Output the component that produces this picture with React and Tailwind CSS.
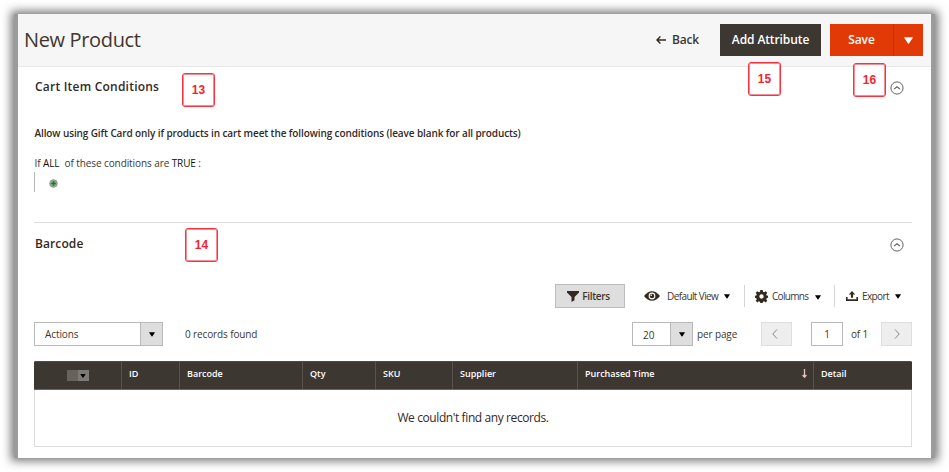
import React from 'react';

function Caret({ className = '' }) {
  return (
    <svg viewBox="0 0 8 6" className={`block shrink-0 ${className}`} fill="currentColor">
      <path d="M0.6 0h6.8q.8 0 .3.7L4.6 5.4q-.6.8-1.2 0L.3.7Q-.2 0 .6 0z" />
    </svg>
  );
}

function CollapseIcon() {
  return (
    <svg viewBox="0 0 14 14" className="block h-3.5 w-3.5 shrink-0" fill="none" stroke="#66625f">
      <circle cx="7" cy="7" r="6.1" strokeWidth="1" />
      <path d="M4 8.100 7 5.700l3 2.400" strokeWidth="1.2" />
    </svg>
  );
}

function Chevron({ d }) {
  return (
    <svg viewBox="0 0 6 10" className="block h-2.5 w-1.5" fill="none" stroke="#858585">
      <path d={d} strokeWidth="1" />
    </svg>
  );
}

function Marker({ children, className }) {
  return (
    <div
      className={`absolute flex h-[34px] w-[33px] items-center justify-center rounded-[3px] border border-[#f8333f] bg-white font-['Liberation_Sans',sans-serif] text-[12px] font-bold text-[#f5222f] shadow-[inset_0_0_0_1px_#fa8d94] ${className}`}
    >
      {children}
    </div>
  );
}

function Header() {
  return (
    <header className="flex h-[53px] items-center border-b border-[#e8e8e8] bg-[#f6f6f6] pl-1.5 pr-2">
      <h1 className="text-[20px] leading-[28px] tracking-[-0.35px] text-[#41362f]">New Product</h1>
      <div className="ml-auto mr-[21px] flex items-center gap-[6px] text-[12px] font-semibold text-[#41362f]">
        <svg viewBox="0 0 10 8" className="h-2 w-2.5" fill="none" stroke="#33291f" strokeWidth="1.4">
          <path d="M10 4H1M4.4.6 1 4l3.4 3.4" />
        </svg>
        <span className="tracking-[-0.15px]">Back</span>
      </div>
      <button className="h-8 w-[101px] bg-[#3d3731] text-[12px] font-semibold tracking-[-0.1px] text-white">
        Add Attribute
      </button>
      <div className="ml-[9px] flex h-8 bg-[#e23a06] text-[12px] font-semibold tracking-[-0.1px] text-white">
        <button className="w-[64px] border-r border-[#c53204]">Save</button>
        <button className="flex w-[29px] items-center justify-center">
          <Caret className="h-[7px] w-[9px]" />
        </button>
      </div>
    </header>
  );
}

function CartConditions() {
  return (
    <section className="h-[156px] border-b border-[#dcdcdc] pt-[10px]">
      <div className="flex h-5 items-center justify-between pr-[8px]">
        <h2 className="pl-px text-[12px] font-semibold tracking-[0.22px] text-[#33291f]">Cart Item Conditions</h2>
        <div className="mt-[2px]"><CollapseIcon /></div>
      </div>
      <p className="mt-[28px] pl-[0.5px] text-[10px] font-semibold leading-4 tracking-[-0.11px] text-[#33291f]">
        Allow using Gift Card only if products in cart meet the following conditions (leave blank for all products)
      </p>
      <p className="mt-[14px] whitespace-pre pl-[0.5px] text-[10px] leading-4 tracking-[-0.09px] text-[#41362f]">
        {'If '}<span className="text-[#111]">ALL</span>{'  of these conditions are '}<span className="text-[#111]">TRUE</span>{' :'}
      </p>
      <div className="mt-px flex h-5 items-center border-l border-[#b5b5b5] pl-[14px]">
        <svg viewBox="0 0 9 9" className="mt-[3px] h-[9px] w-[9px]">
          <circle cx="4.500" cy="4.500" r="3.800" fill="#86b084" stroke="#909d90" strokeWidth="1" />
          <path d="M4.500 2.300v4.400M2.300 4.500h4.400" stroke="#21702c" strokeWidth="1.5" />
        </svg>
      </div>
    </section>
  );
}

function GridControls() {
  return (
    <div className="flex h-6 items-center justify-end text-[10px] text-[#41362f]">
      <button className="flex h-6 w-[70px] items-center justify-center gap-[3px] border border-[#bdbdbd] bg-[#dedede] pr-[3px] font-semibold tracking-[-0.3px]">
        <svg viewBox="0 0 12 11" className="h-[11px] w-3" fill="#33291f">
          <path d="M0 0h12v1.500L7.500 6v3.200L4.500 11V6L0 1.500z" />
        </svg>
        Filters
      </button>
      <div className="flex w-[120px] items-center border-r border-[#d6d6d6] pl-[19px]">
        <svg viewBox="0 0 16 10" className="h-2.5 w-4" fill="none">
          <path d="M0 5Q3.500.2 8 .2T16 5Q12.500 9.800 8 9.800T0 5z" fill="#33291f" />
          <circle cx="8" cy="5" r="3.400" fill="#fff" />
          <circle cx="8" cy="5" r="2.300" fill="#33291f" />
          <circle cx="7.200" cy="4.200" r=".8" fill="#fff" />
        </svg>
        <span className="ml-[7px] w-[50px] whitespace-nowrap leading-[22px] tracking-[-0.6px]">Default View</span>
        <Caret className="ml-[7px] mt-px h-[5px] w-[6px] text-black" />
      </div>
      <div className="flex w-[90px] items-center border-r border-[#d6d6d6] pl-[10px]">
        <svg viewBox="0 0 24 24" className="h-[13px] w-[13px]" fill="#33291f">
          <path
            fillRule="evenodd"
            d="M9.800 0h4.400l.6 3.400 2 .8L19.700 2.200l3 3-2 2.900.9 2 2.400.5v3.800l-2.500.6-.8 2 2 2.900-3 3-2.900-2-2 .8-.6 2.300H9.800l-.6-2.300-2-.8-2.900 2-3-3 2-2.900-.8-2L0 14.400v-3.800l2.400-.5.9-2-2-2.900 3-3 2.900 2 2-.8zM12 8a4 4 0 1 0 0 8 4 4 0 0 0 0-8z"
          />
        </svg>
        <span className="ml-[4px] w-[36px] leading-[22px] tracking-[-0.7px]">Columns</span>
        <Caret className="ml-[7px] mt-[2px] h-[5px] w-[6px] text-black" />
      </div>
      <div className="flex w-[77px] items-center pl-[11px]">
        <svg viewBox="0 0 12 10" className="h-2.5 w-3" fill="#33291f">
          <path d="M0 6h1.600v2.300h8.800V6H12v4H0z" />
          <path d="M6 0l3.200 3.600H7.100V6.800H4.900V3.600H2.800z" />
        </svg>
        <span className="ml-[4px] w-[26px] leading-[22px] tracking-[-0.6px]">Export</span>
        <Caret className="ml-[7px] mt-px h-[5px] w-[6px] text-black" />
      </div>
    </div>
  );
}

function PagerRow() {
  return (
    <div className="mt-[14px] flex h-6 items-center text-[10px] text-[#41362f]">
      <div className="flex h-6 w-[129px] border border-[#b9b9b9]">
        <span className="flex-1 pl-[10px] leading-[23px] tracking-[-0.1px]">Actions</span>
        <span className="flex w-[22px] items-center justify-center border-l border-[#b9b9b9] bg-[#dedede]">
          <Caret className="h-[5px] w-[6px] text-black" />
        </span>
      </div>
      <span className="ml-[22px] tracking-[-0.12px]">0 records found</span>
      <div className="ml-auto flex h-6 w-[61px] border border-[#b9b9b9]">
        <span className="flex-1 pl-[10px] leading-[24px]">20</span>
        <span className="flex w-[22px] items-center justify-center border-l border-[#b9b9b9] bg-[#dedede]">
          <Caret className="mt-px h-[5px] w-[6px] text-black" />
        </span>
      </div>
      <span className="ml-[4px] w-[64px] tracking-[-0.12px]">per page</span>
      <button className="flex h-6 w-[31px] items-center justify-center border border-[#dedede] bg-[#eeeeee] pr-[3px]">
        <Chevron d="M5 .5.8 5 5 9.500" />
      </button>
      <span className="ml-[19px] h-6 w-[32px] border border-[#b9b9b9] text-center leading-[23px]">1</span>
      <span className="ml-[8px] w-[30px] tracking-[-0.2px]">of 1</span>
      <button className="flex h-6 w-[31px] items-center justify-center border border-[#dedede] bg-[#eeeeee]">
        <Chevron d="M1 .5 5.200 5 1 9.500" />
      </button>
    </div>
  );
}

function RecordsTable() {
  const cell = 'border-r border-[#59534d] pl-[7px]';
  return (
    <div className="mt-[15px] h-[86px] border border-[#dedede] border-t-[#514943] text-white">
      <div className="-mx-px grid h-[28px] grid-cols-[88px_58px_123px_73px_77px_125px_236px_98px] border-b border-[#6b655f] bg-[#3d3731] text-[9px] font-semibold leading-[24px]">
        <div className="flex items-center justify-center border-r border-[#59534d]">
          <span className="h-[11px] w-[11px] bg-[#67625e]" />
          <span className="flex h-[11px] w-[11px] items-center justify-center bg-[#7d7975]">
            <Caret className="h-[4px] w-[6px] text-black" />
          </span>
        </div>
        <div className={cell}>ID</div>
        <div className={cell}>Barcode</div>
        <div className={cell}>Qty</div>
        <div className={cell}>SKU</div>
        <div className={cell}>Supplier</div>
        <div className={`flex items-start justify-between pr-[6px] ${cell}`}>
          Purchased Time
          <svg viewBox="0 0 5 9" className="mt-[7px] h-[9px] w-[5px]" fill="none" stroke="#e8c5bc" strokeWidth="1.3">
            <path d="M2.500 0v8M.6 6l1.900 2.200L4.400 6" />
          </svg>
        </div>
        <div className="pl-[7px]">Detail</div>
      </div>
      <p className="text-center text-[12px] leading-[56px] tracking-[-0.4px] text-[#33291f]">We couldn't find any records.</p>
    </div>
  );
}

export default function App() {
  return (
    <div className="relative h-[472px] w-[949px] overflow-hidden bg-white pl-[14px] pt-[14px] font-['Open_Sans','Noto_Sans',sans-serif]">
      <div className="h-[444px] w-[921px] bg-[#9b9b9b] px-[4px] shadow-[0_0_9px_3px_#777]">
        <main className="h-[444px] bg-white">
          <Header />
          <div className="pl-4 pr-[19px]">
            <CartConditions />
            <section>
              <div className="flex h-[61px] items-start justify-between pr-[8px] pt-[11px]">
                <h2 className="pl-px text-[12px] font-semibold leading-5 tracking-[0.1px] text-[#33291f]">Barcode</h2>
                <div className="mt-[4px]"><CollapseIcon /></div>
              </div>
              <GridControls />
              <PagerRow />
              <RecordsTable />
            </section>
          </div>
        </main>
      </div>
      <Marker className="left-[182px] top-[73px]">13</Marker>
      <Marker className="left-[185px] top-[228px]">14</Marker>
      <Marker className="left-[748px] top-[62px]">15</Marker>
      <Marker className="left-[853px] top-[63px]">16</Marker>
    </div>
  );
}
